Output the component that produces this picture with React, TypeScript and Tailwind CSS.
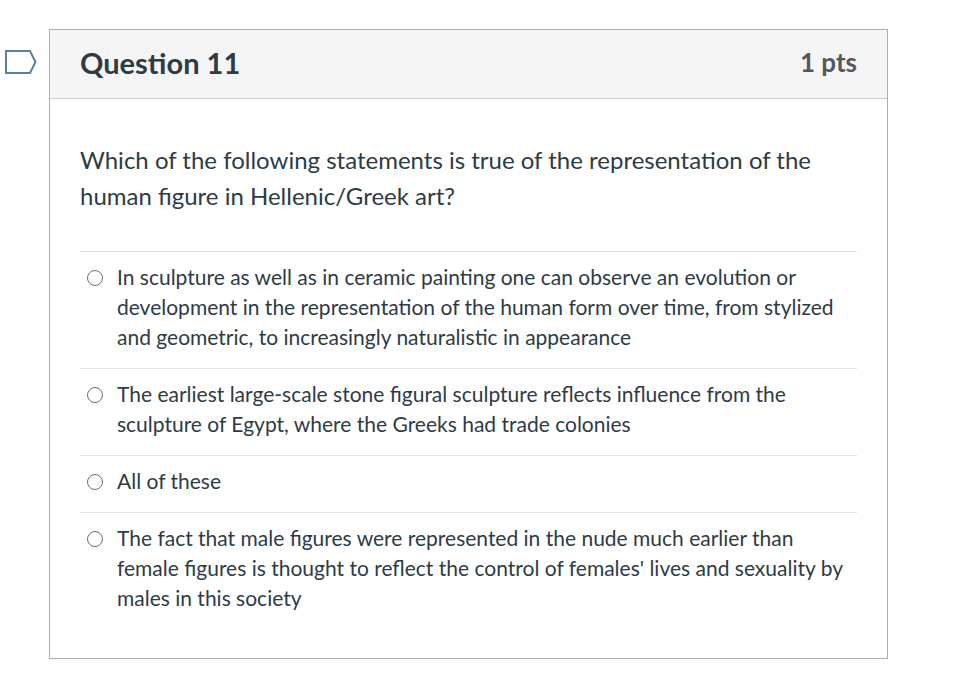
import React from 'react';

const answers = [
  'In sculpture as well as in ceramic painting one can observe an evolution or development in the representation of the human form over time, from stylized and geometric, to increasingly naturalistic in appearance',
  'The earliest large-scale stone figural sculpture reflects influence from the sculpture of Egypt, where the Greeks had trade colonies',
  'All of these',
  "The fact that male figures were represented in the nude much earlier than female figures is thought to reflect the control of females' lives and sexuality by males in this society",
];

function FlagIcon() {
  return (
    <svg width="34" height="27" viewBox="0 0 34 27" fill="none">
      <path d="M2 2 H26 L31.5 13 L26 24 H2 Z" stroke="#5b7fa1" strokeWidth="2" strokeLinejoin="miter" />
    </svg>
  );
}

export default function App() {
  return (
    <div className="min-h-screen bg-white pt-[29px] text-[#2d3b45]" style={{ fontFamily: 'Lato, "Open Sans", sans-serif' }}>
      <div className="flex">
        <div className="w-[49px] shrink-0 pl-[4px] pt-[20px]">
          <FlagIcon />
        </div>
        <div className="w-[839px] border border-[#adadad]">
          {/* Header */}
          <div className="h-[69px] flex items-center justify-between px-[30px] pb-[3px] bg-[#f5f5f5] border-b border-[#c7cdd1]">
            <h2 className="text-[29px] font-bold text-[#2d3b45]">Question 11</h2>
            <span className="text-[26px] font-bold text-[#56575b]">1 pts</span>
          </div>

          {/* Body */}
          <div className="px-[30px] pt-[43px] pb-[29px]">
            <p className="text-[24px] leading-[36px]">
              Which of the following statements is true of the representation of the human figure in Hellenic/Greek art?
            </p>
            <div className="mt-[37px]">
              {answers.map((a) => (
                <div key={a} className="border-t border-[#e4e4e4] flex items-start gap-[14px] pl-[7px] pt-[10px] pb-[16px]">
                  <div className="mt-[8px] w-[16px] h-[16px] rounded-full border border-[#6b6f73] shrink-0" />
                  <p className="text-[21px] leading-[30px]">{a}</p>
                </div>
              ))}
            </div>
          </div>
        </div>
      </div>
    </div>
  );
}
